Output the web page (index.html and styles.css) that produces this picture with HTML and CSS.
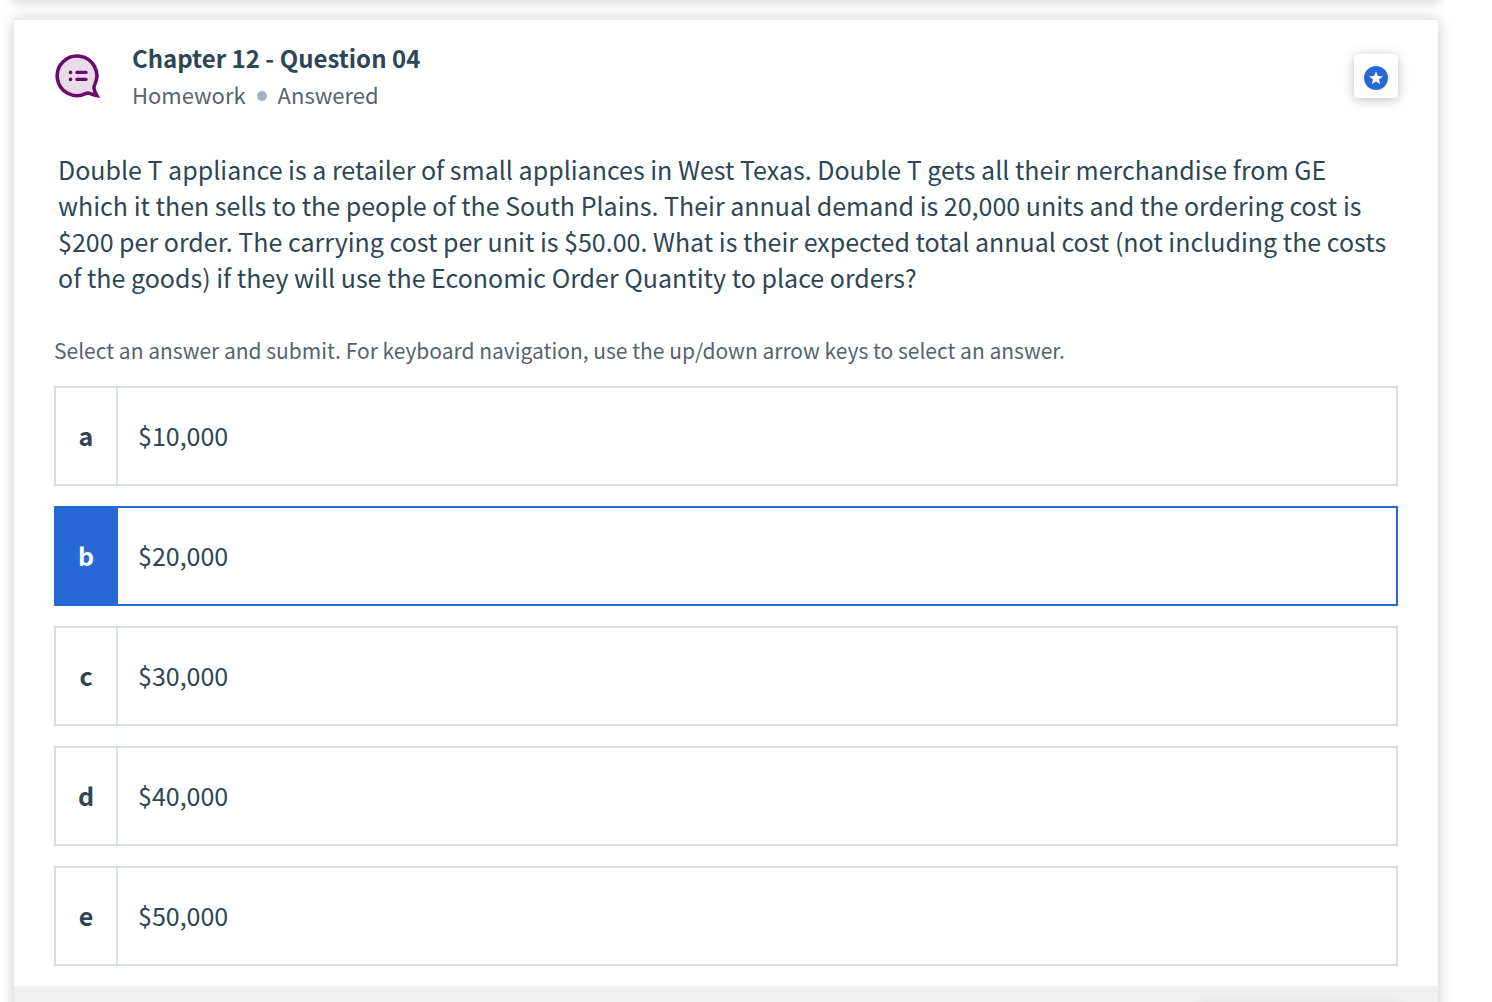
FILE: index.html
```
<!DOCTYPE html>
<html lang="en">
<head>
<meta charset="utf-8">
<meta name="viewport" content="width=device-width, initial-scale=1">
<title>Chapter 12 - Question 04</title>
<link rel="stylesheet" href="styles.css">
</head>
<body>
<main class="feed">
  <div class="card card-previous"></div>
  <article class="card">
    <div class="card-body">
      <header class="card-header">
        <svg class="type-icon" viewBox="0 0 48 48" aria-hidden="true">
          <path d="M40.8 32.5A19.8 19.8 0 1 0 31.5 41.7C33 41 34.8 41 36.4 41.7C38.6 42.6 40.6 43.2 42.8 43.6C41.2 40.6 40.2 38.6 40 36.2C39.9 34.6 40.2 33.6 40.8 32.5Z" fill="#e9dbe8" stroke="#6a0b6c" stroke-width="3.6"/>
          <path d="M22.9 20.4H32.1M22.9 27.4H32.1" stroke="#6a0b6c" stroke-width="3.2" stroke-linecap="round"/>
          <circle cx="16.5" cy="20.4" r="1.8" fill="#6a0b6c"/>
          <circle cx="16.5" cy="27.4" r="1.8" fill="#6a0b6c"/>
        </svg>
        <div class="heading">
          <h1 class="title">Chapter 12 - Question 04</h1>
          <p class="meta"><span>Homework</span><span class="dot"></span><span>Answered</span></p>
        </div>
        <button class="bookmark" type="button" aria-label="Bookmark question">
          <svg viewBox="0 0 24 24" aria-hidden="true">
            <circle cx="12" cy="12" r="12" fill="#2669d6"/>
            <path d="M12 5.2L13.9 9.9L18.9 10.2L15 13.4L16.3 18.3L12 15.6L7.7 18.3L9 13.4L5.1 10.2L10.1 9.9Z" fill="#fff"/>
          </svg>
        </button>
      </header>
      <p class="question">Double T appliance is a retailer of small appliances in West Texas. Double T gets all their merchandise from GE which it then sells to the people of the South Plains. Their annual demand is 20,000 units and the ordering cost is $200 per order. The carrying cost per unit is $50.00. What is their expected total annual cost (not including the costs of the goods) if they will use the Economic Order Quantity to place orders?</p>
      <fieldset class="answers">
        <legend class="hint">Select an answer and submit. For keyboard navigation, use the up/down arrow keys to select an answer.</legend>
        <div class="options">
          <label class="option"><input type="radio" name="answer" value="a"><span class="letter">a</span><span class="value">$10,000</span></label>
          <label class="option"><input type="radio" name="answer" value="b" checked><span class="letter">b</span><span class="value">$20,000</span></label>
          <label class="option"><input type="radio" name="answer" value="c"><span class="letter">c</span><span class="value">$30,000</span></label>
          <label class="option"><input type="radio" name="answer" value="d"><span class="letter">d</span><span class="value">$40,000</span></label>
          <label class="option"><input type="radio" name="answer" value="e"><span class="letter">e</span><span class="value">$50,000</span></label>
        </div>
      </fieldset>
    </div>
    <footer class="card-footer"><div class="footer-panel"></div></footer>
  </article>
</main>
</body>
</html>
```
FILE: styles.css
```
* {
  box-sizing: border-box;
}

body {
  margin: 0;
  height: 100vh;
  overflow: hidden;
  background: #fff;
  color: #2d4654;
  font-family: "Noto Sans CJK SC", "Open Sans", sans-serif;
  font-size: 25px;
  line-height: 36px;
}

.feed {
  display: flex;
  flex-direction: column;
  gap: 20px;
  padding: 0 54px 0 14px;
}

.card {
  background: #fff;
  box-shadow: 0 -2px 0 #ebebeb, 0 0 14px rgba(0, 0, 0, 0.22);
}

.card-previous {
  height: 0;
  box-shadow: 0 0 10px 2px rgba(0, 0, 0, 0.28);
}

.card-body {
  padding: 20px 40px;
}

.card-header {
  display: flex;
  align-items: center;
  height: 72px;
}

.type-icon {
  width: 48px;
  height: 48px;
  margin-right: 30px;
}

.heading {
  flex: 1;
}

.title,
.meta {
  margin: 0;
}

.title {
  font-size: 24px;
  font-weight: 700;
  line-height: 36px;
}

.meta {
  display: flex;
  align-items: center;
  gap: 11px;
  color: #55636f;
  font-size: 22px;
}

.dot {
  width: 10px;
  height: 10px;
  margin-top: 4px;
  border-radius: 50%;
  background: #a3b0bc;
}

.bookmark {
  display: grid;
  place-items: center;
  width: 44px;
  height: 44px;
  padding: 0;
  border: 0;
  border-radius: 4px;
  background: #fff;
  box-shadow: 0 2px 12px rgba(0, 0, 0, 0.25);
}

.bookmark svg {
  width: 24px;
  height: 24px;
  margin-top: 4px;
}

.question {
  margin: 39px 4px 37px;
}

.answers {
  min-width: 0;
  margin: 0;
  padding: 0;
  border: 0;
}

.hint {
  padding: 0;
  color: #55636f;
  font-size: 21px;
}

.options {
  display: grid;
  gap: 20px;
  padding-top: 18px;
}

.option {
  position: relative;
  display: flex;
  height: 100px;
  border: 2px solid #d8dde1;
}

.option input {
  position: absolute;
  inset: 0;
  margin: 0;
  appearance: none;
  cursor: pointer;
}

.letter,
.value {
  display: grid;
  align-items: center;
  padding-bottom: 2px;
}

.letter {
  justify-items: center;
  width: 62px;
  border-right: 2px solid #d8dde1;
  font-weight: 700;
}

.value {
  padding-left: 20px;
}

.option:has(input:checked) {
  border-color: #2669d6;
}

input:checked + .letter {
  border-color: #2669d6;
  background: #2669d6;
  color: #fff;
}

.card-footer {
  display: flex;
  justify-content: flex-end;
  padding: 20px 40px;
  background: #f0f0f0;
}

.footer-panel {
  width: 200px;
  height: 56px;
  border-radius: 4px;
  box-shadow: 0 2px 14px rgba(0, 0, 0, 0.2);
}
```
